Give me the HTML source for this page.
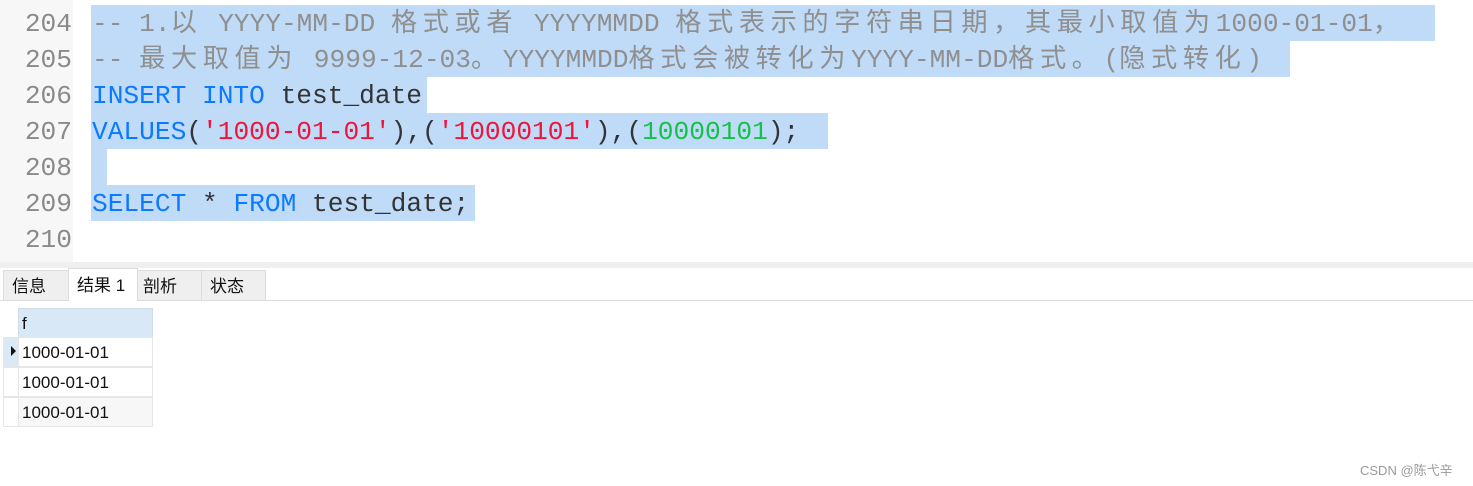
<!DOCTYPE html>
<html><head><meta charset="utf-8"><style>
body{margin:0;width:1473px;height:486px;background:#fff;position:relative;overflow:hidden;font-family:"Liberation Mono","Noto Sans CJK SC",monospace;}
.gut{position:absolute;left:0;top:0;width:73px;height:262px;background:#f7f7f7;}
.ln{position:absolute;left:0;width:72px;text-align:right;font-size:26.2px;color:#8a8a8a;line-height:36px;}
.sel{position:absolute;background:#bfdbf7;height:36px;}
.code{position:absolute;left:92px;font-size:26.2px;line-height:36px;white-space:pre;color:#333;}
.c{letter-spacing:5.6px;}
.cm{color:#8f8f8f}.kw{color:#0a7aff}.st{color:#f0143c}.nm{color:#14c24a}
.sep{position:absolute;left:0;top:262px;width:1473px;height:6px;background:#efefef;}
.tab{position:absolute;top:270px;height:30px;background:#efefef;border:1px solid #dcdcdc;border-bottom:none;font:17px "Liberation Sans","Noto Sans CJK SC",sans-serif;line-height:31px;padding-left:8px;box-sizing:border-box;color:#111}
.tabline{position:absolute;left:0;top:300px;width:1473px;height:1px;background:#dcdcdc}
.cell{position:absolute;left:18px;width:135px;height:30px;box-sizing:border-box;border:1px solid #e6e6e6;font:17px "Liberation Sans",sans-serif;line-height:30px;padding-left:3px;color:#111}
.ind{position:absolute;left:3px;width:15px;height:30px;box-sizing:border-box;border:1px solid #e6e6e6;border-right:none}
</style></head><body>
<div class="gut"></div>
<div class="sel" style="left:91px;top:5px;width:1344px"></div>
<div class="sel" style="left:91px;top:41px;width:1199px"></div>
<div class="sel" style="left:91px;top:77px;width:336px"></div>
<div class="sel" style="left:91px;top:113px;width:737px"></div>
<div class="sel" style="left:91px;top:149px;width:16px"></div>
<div class="sel" style="left:91px;top:185px;width:384px"></div>
<div class="ln" style="top:6px">204</div>
<div class="ln" style="top:42px">205</div>
<div class="ln" style="top:78px">206</div>
<div class="ln" style="top:114px">207</div>
<div class="ln" style="top:150px">208</div>
<div class="ln" style="top:186px">209</div>
<div class="ln" style="top:222px">210</div>
<div class="code cm" style="top:6px">-- 1.<span class="c">以</span> YYYY-MM-DD <span class="c">格式或者</span> YYYYMMDD <span class="c">格式表示的字符串日期，其最小取值为</span>1000-01-01<span class="c">，</span></div>
<div class="code cm" style="top:42px">-- <span class="c">最大取值为</span> 9999-12-03<span class="c">。</span>YYYYMMDD<span class="c">格式会被转化为</span>YYYY-MM-DD<span class="c">格式。</span>(<span class="c">隐式转化</span>)</div>
<div class="code" style="top:78px"><span class="kw">INSERT INTO</span> test_date</div>
<div class="code" style="top:114px"><span class="kw">VALUES</span>(<span class="st">'1000-01-01'</span>),(<span class="st">'10000101'</span>),(<span class="nm">10000101</span>);</div>
<div class="code" style="top:186px"><span class="kw">SELECT</span> * <span class="kw">FROM</span> test_date;</div>
<div class="sep"></div>
<div class="tabline"></div>
<div class="tab" style="left:3px;width:66px">信息</div>
<div class="tab" style="left:68px;width:70px;top:268px;height:33px;background:#fff;line-height:33px">结果 1</div>
<div class="tab" style="left:137px;width:65px;padding-left:5px">剖析</div>
<div class="tab" style="left:201px;width:65px">状态</div>
<div class="cell" style="top:308px;background:#d8e8f6;border-color:#d0dde9">f</div>
<div class="ind" style="top:337px;background:#dbe9f6"><svg width="14" height="28" style="position:absolute;left:3px;top:0"><path d="M4 8 L9 13 L4 18Z" fill="#111"/></svg></div>
<div class="cell" style="top:337px">1000-01-01</div>
<div class="ind" style="top:367px"></div>
<div class="cell" style="top:367px">1000-01-01</div>
<div class="ind" style="top:397px"></div>
<div class="cell" style="top:397px;background:#f7f7f7">1000-01-01</div>
<div style="position:absolute;left:1360px;top:460px;font:13px 'Liberation Sans','Noto Sans CJK SC',sans-serif;color:#999">CSDN @陈弋辛</div>
</body></html>
